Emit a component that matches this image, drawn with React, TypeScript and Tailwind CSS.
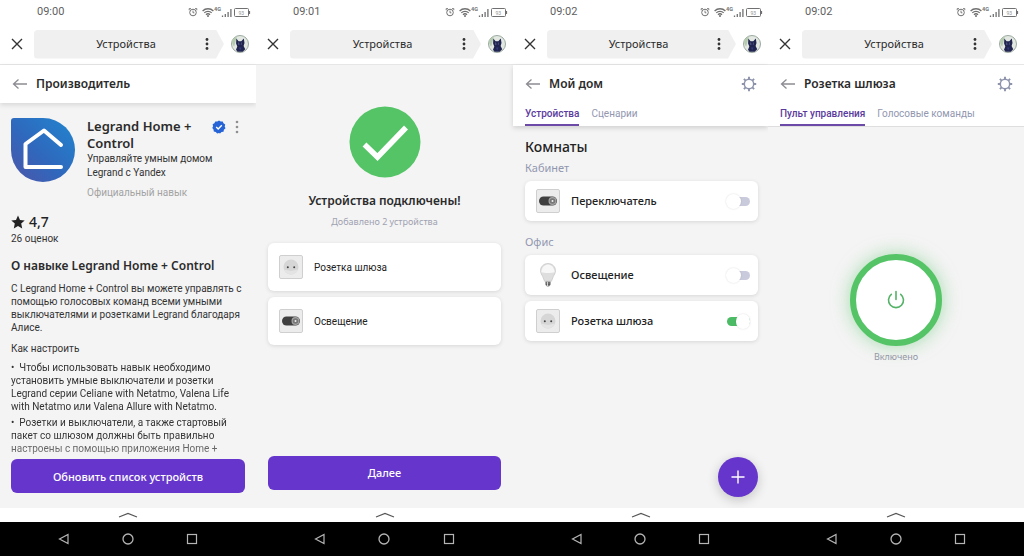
import type { ReactNode } from "react";
import { useState } from "react";

function StatusIcons() {
  return (
    <svg viewBox="0 0 64 14" className="h-[14px] w-[64px]" fill="none" stroke="#707070">
      <circle cx="6" cy="7.5" r="3.3" />
      <path d="M6 5.6v2.2h1.4M2.2 5.2V3.6h1.8M9.8 5.2V3.6H8" strokeWidth="0.9" />
      <path d="M15.6 6c3-3 7.8-3 10.8 0M17.3 7.9c2-2 5.4-2 7.4 0M19 9.7c1.2-1.2 2.8-1.2 4 0" strokeWidth="1.3" />
      <circle cx="21" cy="11" r="1" fill="#707070" stroke="none" />
      <path d="M35.500 12v-1.500M38.300 12V9M41.100 12V7M43.900 12V4" strokeWidth="1.300" />
      <rect x="47.500" y="3.500" width="14" height="8" rx="1" />
      <path d="M62.500 6v3" strokeWidth="1.200" />
      <text x="27" y="6" fontSize="5.500" fontWeight="700" fill="#707070" stroke="none">4G</text>
      <text x="51.500" y="9.500" fontSize="5" fill="#909090" stroke="none">93</text>
    </svg>
  );
}

function Avatar() {
  return (
    <svg viewBox="0 0 18 18" className="h-[18px] w-[18px] shrink-0" aria-hidden="true">
      <circle cx="9" cy="9" r="8.500" fill="#e3e8e3" stroke="#9aa9a0" />
      <path d="M1.200 5.500A8.500 8.500 0 0 1 6 1.100l-1 4-1.800 6.400C1.500 10 .8 7.500 1.200 5.500z" fill="#b4c9ae" />
      <path d="M5.300 3.600l2.300 2.600h2.700l2.500-2.800.7 4.600-.9 3 1.600 3.200-2.500 2.500H6.500L5 14.800l1.300-3.300-1.200-3z" fill="#20244f" />
      <path d="M7.600 6.800l.8 2.400-.8 1zM10.300 6.800l-.5 2.400.6.900z" fill="#8790bd" />
      <path d="M8 12.500l1.200 3 1.400-3z" fill="#353b7c" />
    </svg>
  );
}

function TopBar({ time }: { time: string }) {
  return (
    <header className="bg-white">
      <div className="flex h-6 items-center justify-between pr-[5px] pl-[37px]">
        <span className="text-[11px] text-[#5f5f5f]">{time}</span>
        <StatusIcons />
      </div>
      <div className="flex h-[41px] items-center border-b border-[#e6e6e6] pr-[7px] pl-[11px]">
        <button type="button" aria-label="Закрыть" className="w-[23px]">
          <svg viewBox="0 0 12 12" className="h-3 w-3" stroke="#333" strokeWidth="1.400">
            <path d="M1 1l10 10M11 1L1 11" />
          </svg>
        </button>
        <div className="flex h-[29px] flex-1 items-center rounded-l bg-[#f0f0f0] pr-[12px] font-['Noto_Sans',sans-serif] text-[11px] text-[#2b2b2b] [clip-path:polygon(0_0,calc(100%_-_8px)_0,100%_50%,calc(100%_-_8px)_100%,0_100%)]">
          <span className="flex-1 pl-4 text-center">Устройства</span>
          <button type="button" aria-label="Меню" className="px-[3px]">
            <svg viewBox="0 0 4 12" className="h-3 w-1" fill="#333">
              <circle cx="2" cy="1.500" r="1.400" />
              <circle cx="2" cy="6" r="1.400" />
              <circle cx="2" cy="10.500" r="1.400" />
            </svg>
          </button>
        </div>
        <div className="pl-[7px]">
          <Avatar />
        </div>
      </div>
    </header>
  );
}

function BottomBar() {
  return (
    <footer>
      <div className="flex h-[14px] items-center justify-center bg-white">
        <svg viewBox="0 0 20 6" className="h-[6px] w-5" fill="none" stroke="#555" strokeWidth="1.200">
          <path d="M1 5l9-3.500L19 5" />
        </svg>
      </div>
      <nav className="grid h-[34px] grid-cols-3 items-center justify-items-center bg-black px-8" aria-label="Система">
        <button type="button" aria-label="Назад">
          <svg viewBox="0 0 12 12" className="h-3 w-3" fill="none" stroke="#b5b5b5" strokeWidth="1.200">
            <path d="M10 1.500v9L1.500 6z" />
          </svg>
        </button>
        <button type="button" aria-label="Домой">
          <svg viewBox="0 0 12 12" className="h-3 w-3" fill="none" stroke="#b5b5b5" strokeWidth="1.300">
            <circle cx="6" cy="6" r="5" />
          </svg>
        </button>
        <button type="button" aria-label="Обзор">
          <svg viewBox="0 0 12 12" className="h-3 w-3" fill="none" stroke="#b5b5b5" strokeWidth="1.200">
            <rect x="1.500" y="1.500" width="9" height="9" />
          </svg>
        </button>
      </nav>
    </footer>
  );
}

function Screen({ time, children }: { time: string; children: ReactNode }) {
  return (
    <section className="flex min-w-0 flex-col bg-[#f4f4f4]">
      <TopBar time={time} />
      {children}
      <BottomBar />
    </section>
  );
}

function PageTitle({ title, settings = false }: { title: string; settings?: boolean }) {
  return (
    <div className="flex h-[38px] items-center pr-[11px] pl-3">
      <button type="button" aria-label="Назад">
        <svg viewBox="0 0 16 12" className="h-3 w-4" fill="none" stroke="#8c8c93" strokeWidth="1.300">
          <path d="M15 6H1.500M6.500 1.500L1.500 6l5 4.500" />
        </svg>
      </button>
      <h1 className="flex-1 pl-2 font-['Noto_Sans',sans-serif] text-xs font-semibold text-[#2b2b2b]">{title}</h1>
      {settings && (
        <button type="button" aria-label="Настройки">
          <svg viewBox="0 0 16 16" className="h-4 w-4" fill="none" stroke="#8d93ab">
            <circle cx="8" cy="8" r="4.700" strokeWidth="1.500" />
            <path
              d="M8 3V.8M8 13v2.200M3 8H.8M13 8h2.200M4.600 4.600L2.900 2.900M11.400 11.400l1.700 1.700M11.400 4.600l1.700-1.700M4.600 11.400l-1.700 1.700"
              strokeWidth="1.900"
            />
          </svg>
        </button>
      )}
    </div>
  );
}

function Tabs({ items }: { items: string[] }) {
  return (
    <div role="tablist" className="flex h-[23px] gap-3 px-3 text-[10px]">
      {items.map((item, i) => (
        <button
          key={item}
          type="button"
          role="tab"
          aria-selected={i === 0}
          className={
            i === 0
              ? "border-b-2 border-[#6b4aa8] font-medium text-[#5b3a9e]"
              : "border-b-2 border-transparent text-[#9297b0]"
          }
        >
          {item}
        </button>
      ))}
    </div>
  );
}

function SocketIcon() {
  return (
    <svg viewBox="0 0 24 24" className="h-6 w-6 shrink-0" aria-hidden="true">
      <rect x="0.500" y="0.500" width="23" height="23" rx="1.500" fill="#ececec" stroke="#cfcfcf" />
      <circle cx="12" cy="12" r="7.500" fill="#d6d6d6" />
      <path d="M5 14.500a7.500 7.500 0 0 0 14 0l-7 1.500z" fill="#e4e4e4" />
      <circle cx="8.800" cy="12.300" r="1" fill="#444" />
      <circle cx="15.200" cy="12.300" r="1" fill="#444" />
    </svg>
  );
}

function SwitchIcon() {
  return (
    <svg viewBox="0 0 24 24" className="h-6 w-6 shrink-0" aria-hidden="true">
      <rect x="0.500" y="0.500" width="23" height="23" rx="1.500" fill="#ececec" stroke="#cfcfcf" />
      <rect x="3" y="7.500" width="18" height="9" rx="4.500" fill="#3f3f3f" />
      <circle cx="16.500" cy="12" r="4" fill="#a5a5a5" />
      <circle cx="16.500" cy="12" r="2.800" fill="#777" />
      <circle cx="16.500" cy="12" r="1" fill="#eee" />
    </svg>
  );
}

function BulbIcon() {
  return (
    <svg viewBox="0 0 24 24" className="h-6 w-6 shrink-0" aria-hidden="true">
      <path d="M12 .500c4.500 0 7.500 3.400 7.500 7.200 0 2.500-1.300 4-2.200 5.800-.8 1.600-1.100 3.500-1.900 4.800H8.600c-.8-1.300-1.100-3.200-1.900-4.800C5.800 11.700 4.500 10.200 4.500 7.700 4.500 3.900 7.500.5 12 .5z" fill="#dedede" stroke="#c4c4c4" strokeWidth="0.700" />
      <path d="M5.200 9.200c.7-4 2.500-7.700 6.800-7.700s6.100 3.700 6.800 7.700c-3.600 1-10 1-13.600 0z" fill="#f7f7f7" />
      <path d="M9.500 18.500h5v3.300L13 23.500h-2l-1.500-1.700z" fill="#8b8b8b" />
      <path d="M9.500 20h5M9.800 21.700h4.400" stroke="#444" strokeWidth="0.800" />
      <path d="M11.500 19v4" stroke="#eee" strokeWidth="0.800" />
    </svg>
  );
}

const cardStyle = "flex items-center rounded-md bg-white shadow-[0_1px_4px_rgba(0,0,0,0.12)]";

const actionStyle =
  "h-[34px] w-full rounded-md bg-[#6636cc] font-['Noto_Sans',sans-serif] text-[11px] font-medium text-white";

function DeviceRow({ icon, name, initial = false }: { icon: ReactNode; name: string; initial?: boolean }) {
  const [on, setOn] = useState(initial);
  return (
    <label className={`${cardStyle} h-10 cursor-pointer pr-2 pl-[11px]`}>
      {icon}
      <span className="flex-1 pl-[11px] font-['Noto_Sans',sans-serif] text-[11px] font-medium text-[#222]">{name}</span>
      <input type="checkbox" role="switch" checked={on} onChange={(e) => setOn(e.target.checked)} className="peer sr-only" />
      <span className="flex h-[9px] w-[23px] items-center rounded-full bg-[#c9cbdd] before:-ml-px before:size-[15px] before:rounded-full before:bg-white before:shadow-[0_0_2px_rgba(0,0,0,0.15)] before:content-[''] peer-checked:bg-[#4cbb65] peer-checked:before:ml-[9px]" />
    </label>
  );
}

function ManufacturerScreen() {
  return (
    <Screen time="09:00">
      <div className="bg-white shadow-[0_2px_5px_rgba(0,0,0,0.12)]">
        <PageTitle title="Производитель" />
      </div>
      <main className="flex flex-1 flex-col px-[11px] pt-[15px] text-[10px] leading-[13px] text-[#333]">
        <div className="flex items-start">
          <svg viewBox="0 0 64 64" className="h-16 w-16 shrink-0" role="img" aria-label="Legrand">
            <defs>
              <linearGradient id="brand" x1="0" y1="1" x2="1" y2="0">
                <stop offset="0" stopColor="#4d55a8" />
                <stop offset="0.450" stopColor="#2f68bd" />
                <stop offset="1" stopColor="#2186cf" />
              </linearGradient>
            </defs>
            <path d="M3 0h29a32 32 0 1 1-32 32V3a3 3 0 0 1 3-3z" fill="url(#brand)" />
            <path d="M50 27L33 12.500 14.500 26v23H50" fill="none" stroke="#fff" strokeWidth="4" strokeLinejoin="round" strokeLinecap="round" />
          </svg>
          <div className="min-w-0 flex-1 pl-3">
            <div className="flex items-start justify-between">
              <h2 className="w-[116px] font-['Noto_Sans',sans-serif] text-[13px] leading-[17px] font-semibold text-[#2b2b2b]">
                Legrand Home + Control
              </h2>
              <svg viewBox="0 0 14 14" className="mt-[2px] h-[14px] w-[14px]" role="img" aria-label="Подтверждено">
                <path d="M7 .4l1.700 1.100 2-.1.800 1.900 1.700 1.100-.5 2 .8 1.900-1.600 1.400-.4 2-2 .3L8 13.400l-1-.4-1.900.5-1.300-1.600-2-.4-.3-2L.3 8l.8-1.800-.5-2 1.800-1 .9-1.800 2 .1z" fill="#2563d6" />
                <path d="M4.200 7l2 2 3.600-3.800" fill="none" stroke="#fff" strokeWidth="1.400" />
              </svg>
              <button type="button" aria-label="Ещё" className="mt-[2px] mr-[6px]">
                <svg viewBox="0 0 4 14" className="h-[14px] w-1" fill="#8f8f8f">
                  <circle cx="2" cy="2" r="1.300" />
                  <circle cx="2" cy="7" r="1.300" />
                  <circle cx="2" cy="12" r="1.300" />
                </svg>
              </button>
            </div>
            <p className="leading-[14px]">Управляйте умным домом<br />Legrand с Yandex</p>
            <p className="pt-[6px] text-[#a3a3a3]">Официальный навык</p>
          </div>
        </div>
        <div className="flex items-center gap-1 pt-[14px] font-['Noto_Sans',sans-serif] text-sm leading-[17px] font-medium text-[#222]">
          <svg viewBox="0 0 14 14" className="h-[14px] w-[14px]" fill="#222" aria-hidden="true">
            <path d="M7 .5l2 4.400 4.700.5-3.500 3.200 1 4.800L7 11l-4.200 2.400 1-4.800L.3 5.400 5 4.900z" />
          </svg>
          4,7
        </div>
        <p className="pt-[2px]">26 оценок</p>
        <h2 className="pt-3 font-['Noto_Sans',sans-serif] text-xs leading-[17px] font-semibold text-[#2b2b2b]">
          О навыке Legrand Home + Control
        </h2>
        <p className="pt-2">
          С Legrand Home + Control вы можете управлять с помощью голосовых команд всеми умными выключателями и розетками Legrand благодаря Алисе.
        </p>
        <p className="pt-2">Как настроить</p>
        <div className="mask-[linear-gradient(to_bottom,black_80%,rgba(0,0,0,0.6)_100%)]">
          <p className="pt-[6px]">
            •&nbsp; Чтобы использовать навык необходимо установить умные выключатели и розетки Legrand серии Celiane with Netatmo, Valena Life with Netatmo или Valena Allure with Netatmo.
          </p>
          <p className="pt-[3px]">
            •&nbsp; Розетки и выключатели, а также стартовый пакет со шлюзом должны быть правильно настроены с помощью приложения Home +
          </p>
        </div>
        <div className="mt-auto pb-[15px]">
          <button type="button" className={actionStyle}>Обновить список устройств</button>
        </div>
      </main>
    </Screen>
  );
}

function ConnectedScreen() {
  return (
    <Screen time="09:01">
      <main className="flex flex-1 flex-col px-3 pt-[41px]">
        <svg viewBox="0 0 72 72" className="mx-auto h-[72px] w-[72px]" role="img" aria-label="Готово">
          <circle cx="36" cy="36" r="35.500" fill="#54c466" />
          <path d="M15.500 38.500L28.500 51 57 21.500" fill="none" stroke="#fff" strokeWidth="5.500" />
        </svg>
        <h1 className="pt-[14px] text-center font-['Noto_Sans',sans-serif] text-xs leading-[18px] font-semibold text-[#2b2b2b]">
          Устройства подключены!
        </h1>
        <p className="pt-1 text-center font-['Noto_Sans',sans-serif] text-[9px] leading-[16px] text-[#a0a2b2]">
          Добавлено 2 устройства
        </p>
        <ul className="flex flex-col gap-[6px] pt-[13px] text-[10px] text-[#222]">
          <li className={`${cardStyle} h-12 gap-[11px] pl-[11px]`}>
            <SocketIcon />
            Розетка шлюза
          </li>
          <li className={`${cardStyle} h-12 gap-[11px] pl-[11px]`}>
            <SwitchIcon />
            Освещение
          </li>
        </ul>
        <div className="mt-auto pb-[18px]">
          <button type="button" className={actionStyle}>Далее</button>
        </div>
      </main>
    </Screen>
  );
}

function HomeScreen() {
  return (
    <Screen time="09:02">
      <div className="bg-white shadow-[0_2px_5px_rgba(0,0,0,0.15)]">
        <PageTitle title="Мой дом" settings />
        <Tabs items={["Устройства", "Сценарии"]} />
      </div>
      <main className="flex flex-1 flex-col pt-[11px] pr-[10px] pl-3 font-['Noto_Sans',sans-serif]">
        <h2 className="text-sm leading-5 font-medium text-[#222]">Комнаты</h2>
        <h3 className="pt-[3px] pb-[5px] text-[11px] leading-4 text-[#9297b0]">Кабинет</h3>
        <DeviceRow icon={<SwitchIcon />} name="Переключатель" />
        <h3 className="pt-[13px] pb-[5px] text-[11px] leading-4 text-[#9297b0]">Офис</h3>
        <div className="flex flex-col gap-[6px]">
          <DeviceRow icon={<BulbIcon />} name="Освещение" />
          <DeviceRow icon={<SocketIcon />} name="Розетка шлюза" initial />
        </div>
        <button
          type="button"
          aria-label="Добавить"
          className="mt-auto mb-[11px] flex size-10 items-center justify-center self-end rounded-full bg-[#6636cc] shadow-[0_3px_12px_rgba(0,0,0,0.2)]"
        >
          <svg viewBox="0 0 14 14" className="h-[14px] w-[14px]" stroke="#fff" strokeWidth="1.400">
            <path d="M7 .5v13M.5 7h13" />
          </svg>
        </button>
      </main>
    </Screen>
  );
}

function RemoteScreen() {
  return (
    <Screen time="09:02">
      <div className="border-b border-[#dedede] bg-white">
        <PageTitle title="Розетка шлюза" settings />
        <Tabs items={["Пульт управления", "Голосовые команды"]} />
      </div>
      <main className="flex flex-1 flex-col items-center pt-[127px]">
        <button
          type="button"
          aria-label="Питание"
          className="flex size-[92px] items-center justify-center rounded-full border-[6px] border-[#54c466] bg-white shadow-[0_0_18px_rgba(84,196,102,0.5)]"
        >
          <svg viewBox="0 0 20 20" className="h-5 w-5" fill="none" stroke="#54b266" strokeWidth="1.600" strokeLinecap="round">
            <path d="M10 1.500v8M5.300 4.300a7.500 7.500 0 1 0 9.400 0" />
          </svg>
        </button>
        <p className="pt-1 font-['Noto_Sans',sans-serif] text-[9px] leading-[14px] text-[#9297a5]">Включено</p>
      </main>
    </Screen>
  );
}

export default function App() {
  return (
    <div className="grid min-h-screen grid-cols-[256fr_257fr_255fr_256fr] font-['Roboto','Noto_Sans',sans-serif]">
      <ManufacturerScreen />
      <ConnectedScreen />
      <HomeScreen />
      <RemoteScreen />
    </div>
  );
}
